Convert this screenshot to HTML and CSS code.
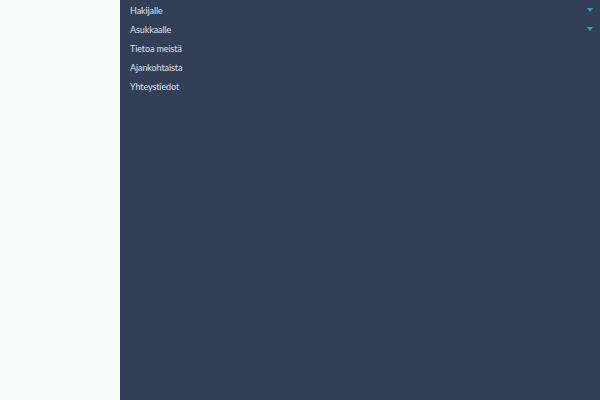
FILE: index.html
```html
<!DOCTYPE html>
<html>
<head>
<meta charset="utf-8">
<link rel="stylesheet" href="styles.css">
</head>
<body>
<div class="page">
  <aside class="side"></aside>
  <nav class="menu">
    <ul class="list">
      <li class="item"><span class="label">Hakijalle</span><span class="caret"></span></li>
      <li class="item"><span class="label">Asukkaalle</span><span class="caret"></span></li>
      <li class="item"><span class="label">Tietoa meistä</span></li>
      <li class="item"><span class="label">Ajankohtaista</span></li>
      <li class="item"><span class="label">Yhteystiedot</span></li>
    </ul>
  </nav>
</div>
</body>
</html>
```
FILE: styles.css
```css
html, body { margin: 0; padding: 0; height: 100%; }
.page { display: flex; width: 600px; height: 400px; }
.side { width: 120px; background: #f9fbfb; flex: none; }
.menu { flex: 1; background: #323f56; }
.list { list-style: none; margin: 0; padding: 0; }
.item {
  display: flex; justify-content: space-between; align-items: center;
  height: 19px; padding: 0 7px 0 10px;
  font-family: Lato, sans-serif; font-size: 9px; color: #dde2ea;
  letter-spacing: -0.1px;
}
.label { padding-top: 1px; }
.caret {
  width: 0; height: 0;
  border-left: 3px solid transparent; border-right: 3px solid transparent;
  border-top: 4px solid #1aa9d6;
}
```
